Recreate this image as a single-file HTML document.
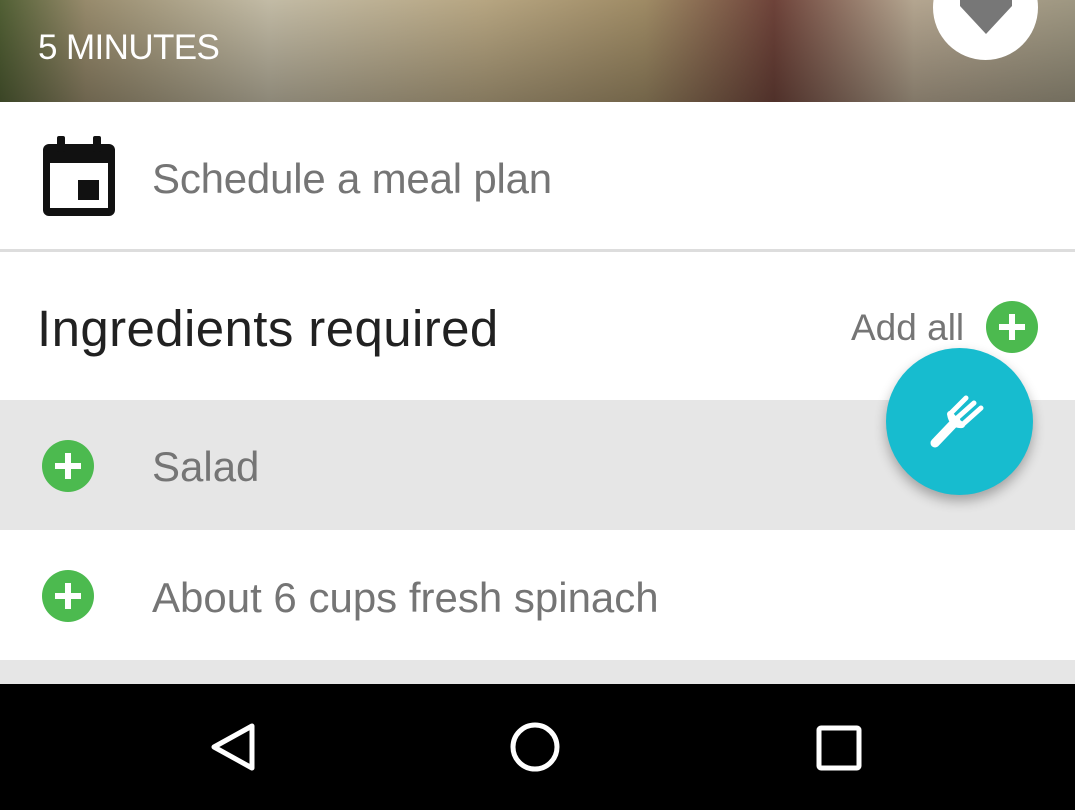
<!DOCTYPE html>
<html><head><style>
body{margin:0;width:1075px;height:810px;overflow:hidden;font-family:"Liberation Sans",sans-serif;background:#fff;position:relative}
.hdr{position:absolute;left:0;top:0;width:1075px;height:102px;background:linear-gradient(90deg,#5a6a3a 0%,#a89a78 8%,#d8d0b8 25%,#cbb890 45%,#b09a70 60%,#7a4a40 72%,#c8b8a0 85%,#b0a890 100%)}
.hdr:after{content:"";position:absolute;inset:0;background:linear-gradient(180deg,rgba(0,0,0,0.1),rgba(0,0,0,0.35))}
.t{position:absolute;white-space:nowrap}
.plus{position:absolute;width:52px;height:52px;border-radius:50%;background:#4cba4f}
.plus:before,.plus:after{content:"";position:absolute;background:#fff;left:50%;top:50%;transform:translate(-50%,-50%)}
.plus:before{width:26px;height:6px}.plus:after{width:6px;height:26px}
</style></head><body>
<div class="hdr"></div>
<div class="t" style="left:38px;top:28px;font-size:35px;color:#fff;z-index:2;letter-spacing:-0.6px">5 MINUTES</div>
<div style="position:absolute;left:933px;top:-45px;width:105px;height:105px;border-radius:50%;background:#fff;z-index:2"></div>
<svg style="position:absolute;left:958px;top:0;z-index:3" width="56" height="36"><path d="M2 0 L54 0 L54 6 L28 34 L2 6Z" fill="#777"/></svg>
<svg style="position:absolute;left:43px;top:136px" width="72" height="80"><rect x="0" y="8" width="72" height="72" rx="6" fill="#111"/><rect x="14" y="0" width="8" height="16" rx="2" fill="#111"/><rect x="50" y="0" width="8" height="16" rx="2" fill="#111"/><rect x="7" y="27" width="58" height="45" fill="#fff"/><rect x="35" y="44" width="21" height="20" fill="#111"/></svg>
<div class="t" style="left:152px;top:155px;font-size:42px;color:#757575;letter-spacing:-0.2px">Schedule a meal plan</div>
<div style="position:absolute;left:0;top:249px;width:1075px;height:3px;background:#ddd"></div>
<div class="t" style="left:37px;top:299px;font-size:51px;color:#212121;letter-spacing:0.4px">Ingredients required</div>
<div class="t" style="left:851px;top:307px;font-size:37px;color:#757575">Add all</div>
<div class="plus" style="left:986px;top:301px"></div>
<div style="position:absolute;left:0;top:400px;width:1075px;height:130px;background:#e6e6e6"></div>
<div class="plus" style="left:42px;top:440px"></div>
<div class="t" style="left:152px;top:443px;font-size:42px;color:#757575">Salad</div>
<div class="plus" style="left:42px;top:570px"></div>
<div class="t" style="left:152px;top:574px;font-size:42px;color:#757575">About 6 cups fresh spinach</div>
<div style="position:absolute;left:0;top:660px;width:1075px;height:24px;background:#e6e6e6"></div>
<div style="position:absolute;left:886px;top:348px;width:147px;height:147px;border-radius:50%;background:#17bccf;box-shadow:0 6px 12px rgba(0,0,0,0.3)"></div>
<svg style="position:absolute;left:886px;top:348px" width="147" height="147"><g stroke="#fff" stroke-linecap="round" stroke-linejoin="round" fill="none"><path d="M49 95 L70 73" stroke-width="9"/><path d="M64 66 L80 50 M70 71 L88 55 M76 77 L95 60" stroke-width="5"/><path d="M64 66 Q66 78 76 77 L70 73Z" stroke-width="6" fill="#fff"/></g></svg>
<div style="position:absolute;left:0;top:684px;width:1075px;height:126px;background:#000"></div>
<svg style="position:absolute;left:0;top:684px" width="1075" height="126"><g stroke="#fff" stroke-width="5" fill="none"><path d="M252 42 L214 63 L252 84Z" stroke-linejoin="round"/><circle cx="535" cy="63" r="22"/><rect x="819" y="44" width="40" height="40" rx="2"/></g></svg>
</body></html>
